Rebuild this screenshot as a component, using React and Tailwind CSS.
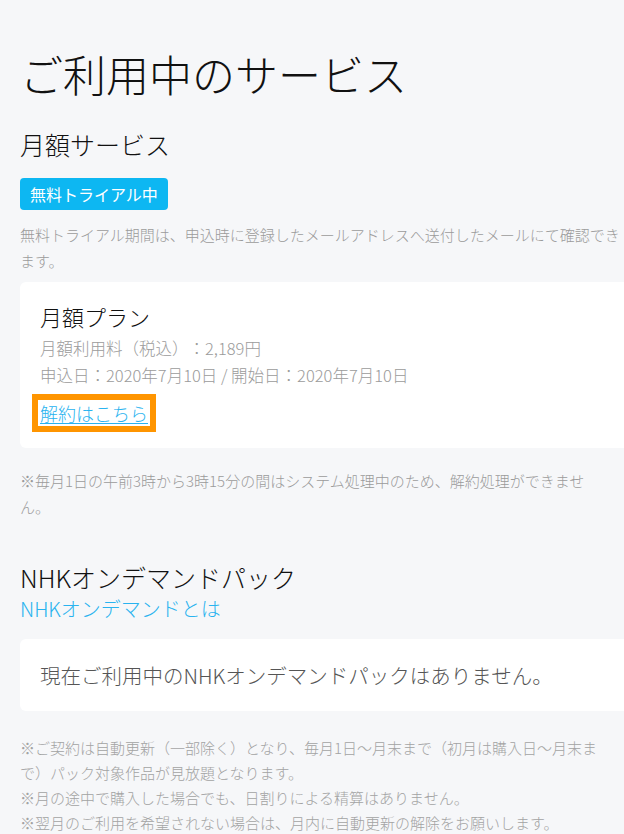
import React from 'react';

const font = { fontFamily: '"Noto Sans CJK JP", "Noto Sans", sans-serif' };

export default function App() {
  return (
    <div
      className="w-[624px] min-h-[834px] overflow-hidden bg-[#f6f7f9] text-[#111] font-light [text-spacing-trim:space-all]"
      style={font}
    >
      <div className="pl-5 pt-[52px] pb-10">
        <h1 className="text-[43px] leading-none font-light">ご利用中のサービス</h1>

        <h2 className="mt-[34px] text-[25px] leading-[30px] font-light">月額サービス</h2>
        <div className="mt-[19px]">
          <span className="inline-flex h-8 items-center rounded-[4px] bg-[#0db7f2] px-[10px] text-[16px] font-normal text-white">
            無料トライアル中
          </span>
        </div>
        <p className="mt-3 w-[604px] text-[15px] leading-[26px] text-[#9b9b9b]">
          無料トライアル期間は、申込時に登録したメールアドレスへ送付したメールにて確認できます。
        </p>

        {/* 月額プラン card */}
        <div className="mt-[8px] w-[640px] rounded-md bg-white pt-[19px] pb-4 pl-5">
          <div className="text-[22px] leading-[30px]">月額プラン</div>
          <div className="mt-[4px] text-[16.5px] leading-[27px] text-[#9b9b9b]">月額利用料（税込）：2,189円</div>
          <div className="text-[16.5px] leading-[27px] text-[#9b9b9b]">申込日：2020年7月10日 / 開始日：2020年7月10日</div>
          <div className="mt-[5px] -ml-2 block w-fit border-[6px] border-[#ff9500] px-[2px]">
            <a href="#" className="block text-[18px] leading-[26px] text-[#29b3ef] underline underline-offset-2">
              解約はこちら
            </a>
          </div>
        </div>

        <p className="mt-[20px] w-[590px] text-[15px] leading-[26px] text-[#9b9b9b]">
          ※毎月1日の午前3時から3時15分の間はシステム処理中のため、解約処理ができません。
        </p>

        <h2 className="mt-[42px] text-[25px] leading-[30px] font-light">NHKオンデマンドパック</h2>
        <a href="#" className="mt-[5px] block text-[20px] leading-[24px] text-[#29b3ef]">NHKオンデマンドとは</a>

        <div className="mt-[18px] flex h-[72px] w-[640px] items-center rounded-md bg-white pl-5">
          <span className="text-[20.5px] text-[#555]">現在ご利用中のNHKオンデマンドパックはありません。</span>
        </div>

        <div className="mt-[24px] w-[590px] text-[15px] leading-[25px] text-[#a3a3a3]">
          <p>※ご契約は自動更新（一部除く）となり、毎月1日〜月末まで（初月は購入日〜月末まで）パック対象作品が見放題となります。</p>
          <p>※月の途中で購入した場合でも、日割りによる精算はありません。</p>
          <p>※翌月のご利用を希望されない場合は、月内に自動更新の解除をお願いします。</p>
        </div>
      </div>
    </div>
  );
}
